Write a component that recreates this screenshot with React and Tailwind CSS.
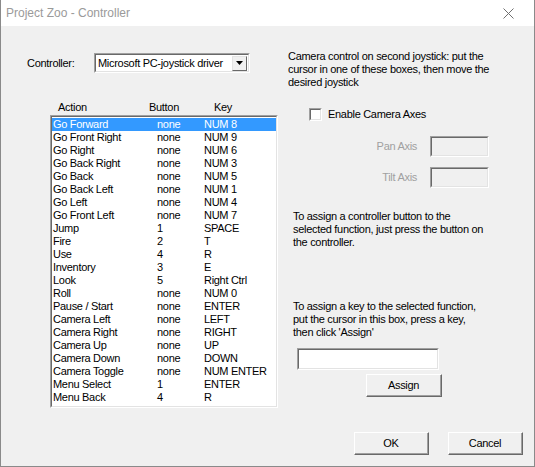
import React from 'react';

const rows = [
  ['Go Forward', 'none', 'NUM 8'],
  ['Go Front Right', 'none', 'NUM 9'],
  ['Go Right', 'none', 'NUM 6'],
  ['Go Back Right', 'none', 'NUM 3'],
  ['Go Back', 'none', 'NUM 5'],
  ['Go Back Left', 'none', 'NUM 1'],
  ['Go Left', 'none', 'NUM 4'],
  ['Go Front Left', 'none', 'NUM 7'],
  ['Jump', '1', 'SPACE'],
  ['Fire', '2', 'T'],
  ['Use', '4', 'R'],
  ['Inventory', '3', 'E'],
  ['Look', '5', 'Right Ctrl'],
  ['Roll', 'none', 'NUM 0'],
  ['Pause / Start', 'none', 'ENTER'],
  ['Camera Left', 'none', 'LEFT'],
  ['Camera Right', 'none', 'RIGHT'],
  ['Camera Up', 'none', 'UP'],
  ['Camera Down', 'none', 'DOWN'],
  ['Camera Toggle', 'none', 'NUM ENTER'],
  ['Menu Select', '1', 'ENTER'],
  ['Menu Back', '4', 'R'],
];

// classic raised push button
const Button = ({ children, className = '' }) => (
  <button
    type="button"
    className={`h-[23px] border border-t-white border-l-white border-b-[#696969] border-r-[#696969] bg-[#f0f0f0] ${className}`}
  >
    <span className="flex h-full w-full items-center justify-center border-b border-r border-b-[#a0a0a0] border-r-[#a0a0a0]">
      {children}
    </span>
  </button>
);

// sunken edit field
const Sunken = ({ className = '', children }) => (
  <div className={`border border-t-[#a0a0a0] border-l-[#a0a0a0] border-b-white border-r-white ${className}`}>
    <div className="h-full w-full border border-t-[#696969] border-l-[#696969] border-b-[#e3e3e3] border-r-[#e3e3e3]">
      {children}
    </div>
  </div>
);

export default function App() {
  return (
    <div className="flex h-[467px] w-[535px] flex-col border border-[#8a8a8a] border-t-0 bg-[#f0f0f0] font-['Liberation_Sans',Arial,sans-serif] text-[11px] leading-[13px] tracking-[-0.3px] text-black">
      {/* title bar */}
      <div className="flex h-[26px] shrink-0 items-center justify-between bg-white pl-[5px] pr-[20px]">
        <span className="text-[12px] tracking-normal text-[#9a9a9a]">Project Zoo - Controller</span>
        <svg width="11" height="11" viewBox="0 0 11 11">
          <path d="M0.5 0.5 L10.5 10.5 M10.5 0.5 L0.5 10.5" stroke="#6f6f6f" strokeWidth="1" />
        </svg>
      </div>

      <div className="flex">
        {/* left column */}
        <div className="flex w-[287px] flex-col">
          <div className="ml-[26px] mt-[27px] flex h-[20px] items-center">
            <span className="w-[67px]">Controller:</span>
            <Sunken className="h-[20px] w-[156px] bg-white">
              <div className="flex h-full items-center justify-between pl-[2px] pr-[1px]">
                <span>Microsoft PC-joystick driver</span>
                <div className="flex h-[15px] w-[15px] items-center justify-center border border-t-[#e3e3e3] border-l-[#e3e3e3] border-b-[#696969] border-r-[#696969] bg-[#f0f0f0]">
                  <svg width="7" height="4" viewBox="0 0 7 4">
                    <path d="M0 0 H7 L3.5 4 Z" fill="#000" />
                  </svg>
                </div>
              </div>
            </Sunken>
          </div>

          <div className="ml-[57px] mt-[28px] flex h-[13px]">
            <span className="w-[91px]">Action</span>
            <span className="w-[65px]">Button</span>
            <span>Key</span>
          </div>

          <Sunken className="ml-[49px] mt-[1px] h-[293px] w-[228px] bg-white">
            <div className="flex flex-col pt-[1px]">
              {rows.map(([action, btn, key], i) => (
                <div
                  key={action}
                  className={`flex h-[13px] pl-[1px] ${i === 0 ? 'bg-[#3399ff] text-white' : ''}`}
                >
                  <span className="w-[104px] whitespace-nowrap">{action}</span>
                  <span className="w-[47px]">{btn}</span>
                  <span className="whitespace-nowrap">{key}</span>
                </div>
              ))}
            </div>
          </Sunken>
        </div>

        {/* right column */}
        <div className="flex flex-col">
          <p className="mt-[24px]">
            Camera control on second joystick: put the
            <br />
            cursor in one of these boxes, then move the
            <br />
            desired joystick
          </p>

          <div className="ml-[21px] mt-[19px] flex h-[13px] items-center">
            <div className="h-[13px] w-[13px] border border-t-[#a0a0a0] border-l-[#a0a0a0] border-b-white border-r-white bg-white">
              <div className="h-full w-full border border-t-[#696969] border-l-[#696969] border-b-[#e3e3e3] border-r-[#e3e3e3]" />
            </div>
            <span className="ml-[6px]">Enable Camera Axes</span>
          </div>

          <div className="mt-[15px] flex items-center">
            <span className="w-[129px] text-right text-[#a0a0a0]">Pan Axis</span>
            <Sunken className="ml-[13px] h-[21px] w-[59px]" />
          </div>
          <div className="mt-[10px] flex items-center">
            <span className="w-[129px] text-right text-[#a0a0a0]">Tilt Axis</span>
            <Sunken className="ml-[13px] h-[21px] w-[59px]" />
          </div>

          <p className="ml-[5px] mt-[22px]">
            To assign a controller button to the
            <br />
            selected function, just press the button on
            <br />
            the controller.
          </p>

          <p className="ml-[5px] mt-[51px]">
            To assign a key to the selected function,
            <br />
            put the cursor in this box, press a key,
            <br />
            then click 'Assign'
          </p>

          <Sunken className="ml-[9px] mt-[9px] h-[22px] w-[142px] bg-white" />

          <Button className="ml-[78px] mt-[4px] w-[76px]">Assign</Button>

          <div className="ml-[66px] mt-[35px] flex gap-[19px]">
            <Button className="w-[75px]">OK</Button>
            <Button className="w-[75px]">Cancel</Button>
          </div>
        </div>
      </div>
    </div>
  );
}
